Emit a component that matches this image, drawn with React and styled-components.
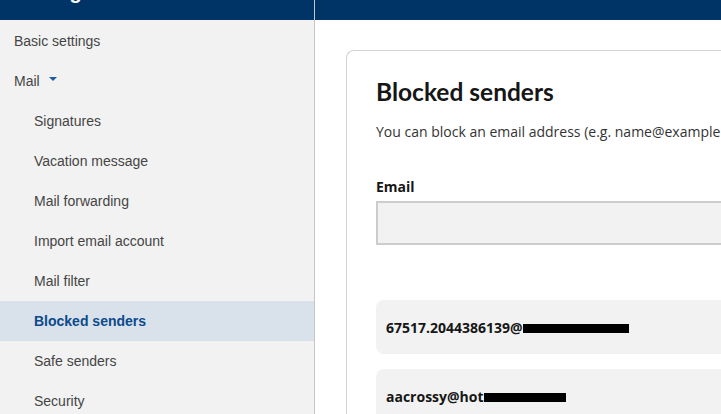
import React from "react";
import styled, { createGlobalStyle } from "styled-components";

const GlobalStyle = createGlobalStyle`
  html, body {
    margin: 0;
    padding: 0;
    height: 100%;
    overflow: hidden;
    background: #ffffff;
  }
  #root {
    height: 100%;
  }
`;

const navItems = [
  { label: "Basic settings", level: 0 },
  { label: "Mail", level: 0, caret: true },
  { label: "Signatures", level: 1 },
  { label: "Vacation message", level: 1 },
  { label: "Mail forwarding", level: 1 },
  { label: "Import email account", level: 1 },
  { label: "Mail filter", level: 1 },
  { label: "Blocked senders", level: 1, active: true },
  { label: "Safe senders", level: 1 },
  { label: "Security", level: 1 },
];

const blocked = [
  { text: "67517.2044386139@", redact: 106 },
  { text: "aacrossy@hot", redact: 82 },
];

function App() {
  return (
    <Page>
      <GlobalStyle />
      <Sidebar>
        <SideHeader>
          <SideTitle>Settings</SideTitle>
        </SideHeader>
        <Nav>
          {navItems.map((item) => (
            <NavItem key={item.label} $level={item.level} $active={item.active}>
              {item.label}
              {item.caret && <Caret />}
            </NavItem>
          ))}
        </Nav>
      </Sidebar>
      <Main>
        <TopBar />
        <Content>
          <Card>
            <Title>Blocked senders</Title>
            <Intro>
              You can block an email address (e.g. name@example.com) or a whole domain (e.g. example.com).
            </Intro>
            <Label>Email</Label>
            <Input type="text" />
            <List>
              {blocked.map((b) => (
                <Entry key={b.text}>
                  <EntryText>{b.text}</EntryText>
                  <Redaction style={{ width: b.redact }} />
                </Entry>
              ))}
            </List>
          </Card>
        </Content>
      </Main>
    </Page>
  );
}

const Page = styled.div`
  display: flex;
  height: 100%;
  width: 100%;
  overflow: hidden;
`;

const Sidebar = styled.aside`
  width: 314px;
  flex-shrink: 0;
  display: flex;
  flex-direction: column;
  background: #f2f2f2;
  border-right: 1px solid #c6c6c6;
  overflow: hidden;
`;

const SideHeader = styled.div`
  height: 20px;
  flex-shrink: 0;
  background: #003366;
  overflow: hidden;
  padding-left: 14px;
`;

const SideTitle = styled.div`
  font-family: "Liberation Sans", Arial, sans-serif;
  font-weight: 700;
  font-size: 20px;
  line-height: 20px;
  color: #ffffff;
  margin-top: -18px;
`;

const Nav = styled.nav`
  display: flex;
  flex-direction: column;
  flex-shrink: 0;
  padding-top: 1px;
`;

const NavItem = styled.div`
  height: 40px;
  flex-shrink: 0;
  display: flex;
  align-items: center;
  padding-left: ${(p) => (p.$level ? 34 : 14)}px;
  font-family: "Liberation Sans", Arial, sans-serif;
  font-size: 14px;
  color: ${(p) => (p.$active ? "#0b4a8b" : "#454545")};
  font-weight: ${(p) => (p.$active ? 700 : 400)};
  background: ${(p) => (p.$active ? "#d9e1ea" : "transparent")};
`;

const Caret = styled.span`
  margin-left: 9px;
  margin-bottom: 4px;
  width: 0;
  height: 0;
  border-left: 4px solid transparent;
  border-right: 4px solid transparent;
  border-top: 4px solid #1a5ca3;
`;

const Main = styled.main`
  flex: 1;
  min-width: 0;
  display: flex;
  flex-direction: column;
  overflow: hidden;
`;

const TopBar = styled.div`
  height: 20px;
  flex-shrink: 0;
  background: #003366;
`;

const Content = styled.div`
  flex-shrink: 0;
  padding: 30px 0 0 31px;
`;

const Card = styled.section`
  border: 1px solid #d2d2d2;
  border-right: none;
  border-radius: 8px 0 0 0;
  padding: 25px 0 0 29px;
  min-height: 400px;
  white-space: nowrap;
`;

const Title = styled.h1`
  margin: 0;
  font-family: Lato, "Open Sans", sans-serif;
  font-weight: 700;
  font-size: 24.5px;
  line-height: 32px;
  color: #161616;
`;

const Intro = styled.p`
  margin: 14px 0 0;
  font-family: "Open Sans", sans-serif;
  font-size: 14px;
  line-height: 20px;
  color: #333333;
`;

const Label = styled.div`
  margin-top: 35px;
  font-family: "Open Sans", sans-serif;
  font-weight: 700;
  font-size: 14px;
  line-height: 20px;
  color: #161616;
`;

const Input = styled.input`
  display: block;
  box-sizing: border-box;
  margin-top: 4px;
  width: 100%;
  height: 44px;
  background: #f2f2f2;
  border: 2px solid #cccccc;
  border-right: none;
  outline: none;
`;

const List = styled.div`
  margin-top: 55px;
  display: flex;
  flex-direction: column;
  gap: 15px;
`;

const Entry = styled.div`
  height: 54px;
  display: flex;
  align-items: center;
  padding-left: 10px;
  background: #f2f2f2;
  border-radius: 8px 0 0 8px;
`;

const EntryText = styled.span`
  font-family: "Open Sans", sans-serif;
  font-weight: 700;
  font-size: 14px;
  color: #161616;
`;

const Redaction = styled.span`
  display: inline-block;
  height: 9px;
  margin-top: 3px;
  background: #000000;
`;

export default App;
